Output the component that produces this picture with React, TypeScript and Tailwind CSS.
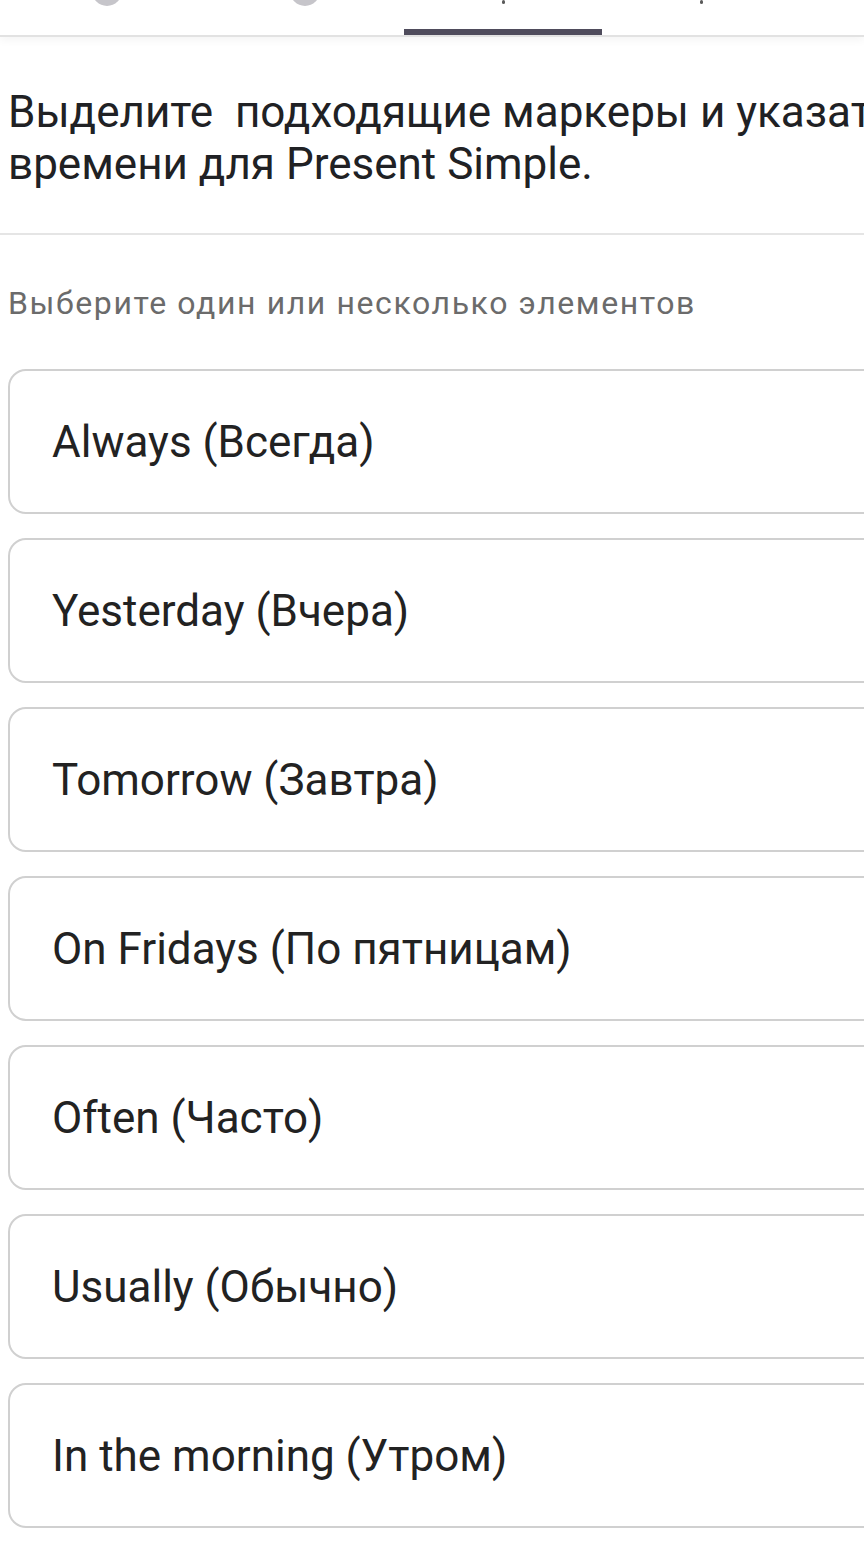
import React from 'react';

const options = [
  'Always (Всегда)',
  'Yesterday (Вчера)',
  'Tomorrow (Завтра)',
  'On Fridays (По пятницам)',
  'Often (Часто)',
  'Usually (Обычно)',
  'In the morning (Утром)',
];

function Tab({ kind, active }: { kind: 'circle' | 'tick'; active?: boolean }) {
  return (
    <div className="relative w-[198px] h-full flex flex-col items-center">
      {kind === 'circle' ? (
        <div className="w-[30px] h-[30px] -mt-[24px] rounded-full bg-[#c6c5ca]" />
      ) : (
        <div className="w-[3px] h-[4px] rounded-full bg-[#5a5a5a]" />
      )}
      {active && <div className="absolute bottom-0 left-0 right-0 h-[6px] bg-[#4f4c5c]" />}
    </div>
  );
}

export default function App() {
  return (
    <div className="w-[864px] min-h-[1564px] bg-white overflow-hidden" style={{ fontFamily: 'Roboto, "Noto Sans", sans-serif' }}>
      <div className="h-[37px] border-b-2 border-[#e2e2e2] shadow-[0_4px_8px_rgba(0,0,0,0.04)] flex pl-[8px] overflow-hidden">
        <Tab kind="circle" />
        <Tab kind="circle" />
        <Tab kind="tick" active />
        <Tab kind="tick" />
      </div>

      <div className="pt-[49px] pb-[43px] pl-[8px] text-[44px] leading-[52px] text-[#202124] whitespace-pre">
        {'Выделите  подходящие маркеры и указать\nвремени для Present Simple.'}
      </div>

      <div className="h-[2px] bg-[#e5e5e5]" />

      <div className="pt-[50px] pl-[8px] text-[32px] leading-[36px] tracking-[1.6px] text-[#6b6b6b] whitespace-nowrap">
        Выберите один или несколько элементов
      </div>

      <div className="mt-[48px] pl-[8px] flex flex-col gap-[24px]">
        {options.map((o) => (
          <div
            key={o}
            className="w-[900px] h-[145px] rounded-[18px] border-2 border-[#d0d0d0] flex items-center pl-[42px] text-[44px] text-[#222222] whitespace-nowrap"
          >
            {o}
          </div>
        ))}
      </div>
    </div>
  );
}
